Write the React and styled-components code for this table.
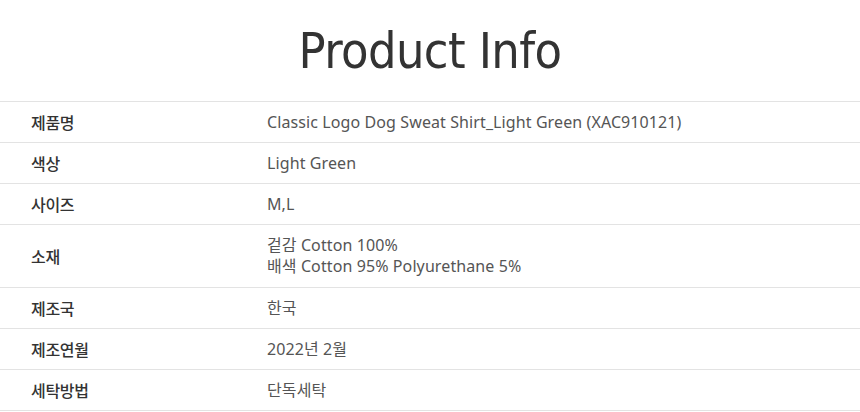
import React from "react";
import styled, { createGlobalStyle } from "styled-components";

const GlobalStyle = createGlobalStyle`
  body {
    margin: 0;
    background: #fff;
    font-family: "Noto Sans CJK KR", "Noto Sans", sans-serif;
  }
`;

const rows = [
  { label: "제품명", value: ["Classic Logo Dog Sweat Shirt_Light Green (XAC910121)"] },
  { label: "색상", value: ["Light Green"] },
  { label: "사이즈", value: ["M,L"] },
  { label: "소재", value: ["겉감 Cotton 100%", "배색 Cotton 95% Polyurethane 5%"] },
  { label: "제조국", value: ["한국"] },
  { label: "제조연월", value: ["2022년 2월"] },
  { label: "세탁방법", value: ["단독세탁"] },
];

function App() {
  return (
    <Wrapper>
      <GlobalStyle />
      <Title>Product Info</Title>
      <InfoTable>
        {rows.map((row) => (
          <Row key={row.label}>
            <Label>{row.label}</Label>
            <Value $multi={row.value.length > 1}>
              {row.value.map((line) => (
                <div key={line}>{line}</div>
              ))}
            </Value>
          </Row>
        ))}
      </InfoTable>
    </Wrapper>
  );
}

export default App;

const Wrapper = styled.div`
  width: 860px;
`;

const Title = styled.h1`
  margin: 0;
  height: 101px;
  display: flex;
  align-items: center;
  justify-content: center;
  font-family: "DejaVu Sans Condensed", "DejaVu Sans", sans-serif;
  font-size: 50px;
  font-weight: 400;
  letter-spacing: -0.6px;
  color: #333;
  padding-top: 1px;
  box-sizing: border-box;
`;

const InfoTable = styled.div`
  border-top: 1px solid #e3e3e3;
`;

const Row = styled.div`
  display: grid;
  grid-template-columns: 236px 1fr;
  align-items: center;
  min-height: 40px;
  padding-left: 31px;
  border-bottom: 1px solid #e3e3e3;
`;

const Label = styled.div`
  color: #333;
  font-size: 16px;
  font-weight: 500;
  line-height: 20px;
  letter-spacing: -0.3px;
`;

const Value = styled.div`
  color: #555;
  font-family: "Noto Sans", "Noto Sans CJK KR", sans-serif;
  font-size: 16px;
  font-weight: 400;
  letter-spacing: 0.1px;
  line-height: ${(p) => (p.$multi ? "21px" : "20px")};
  padding: 10px 0;
`;
